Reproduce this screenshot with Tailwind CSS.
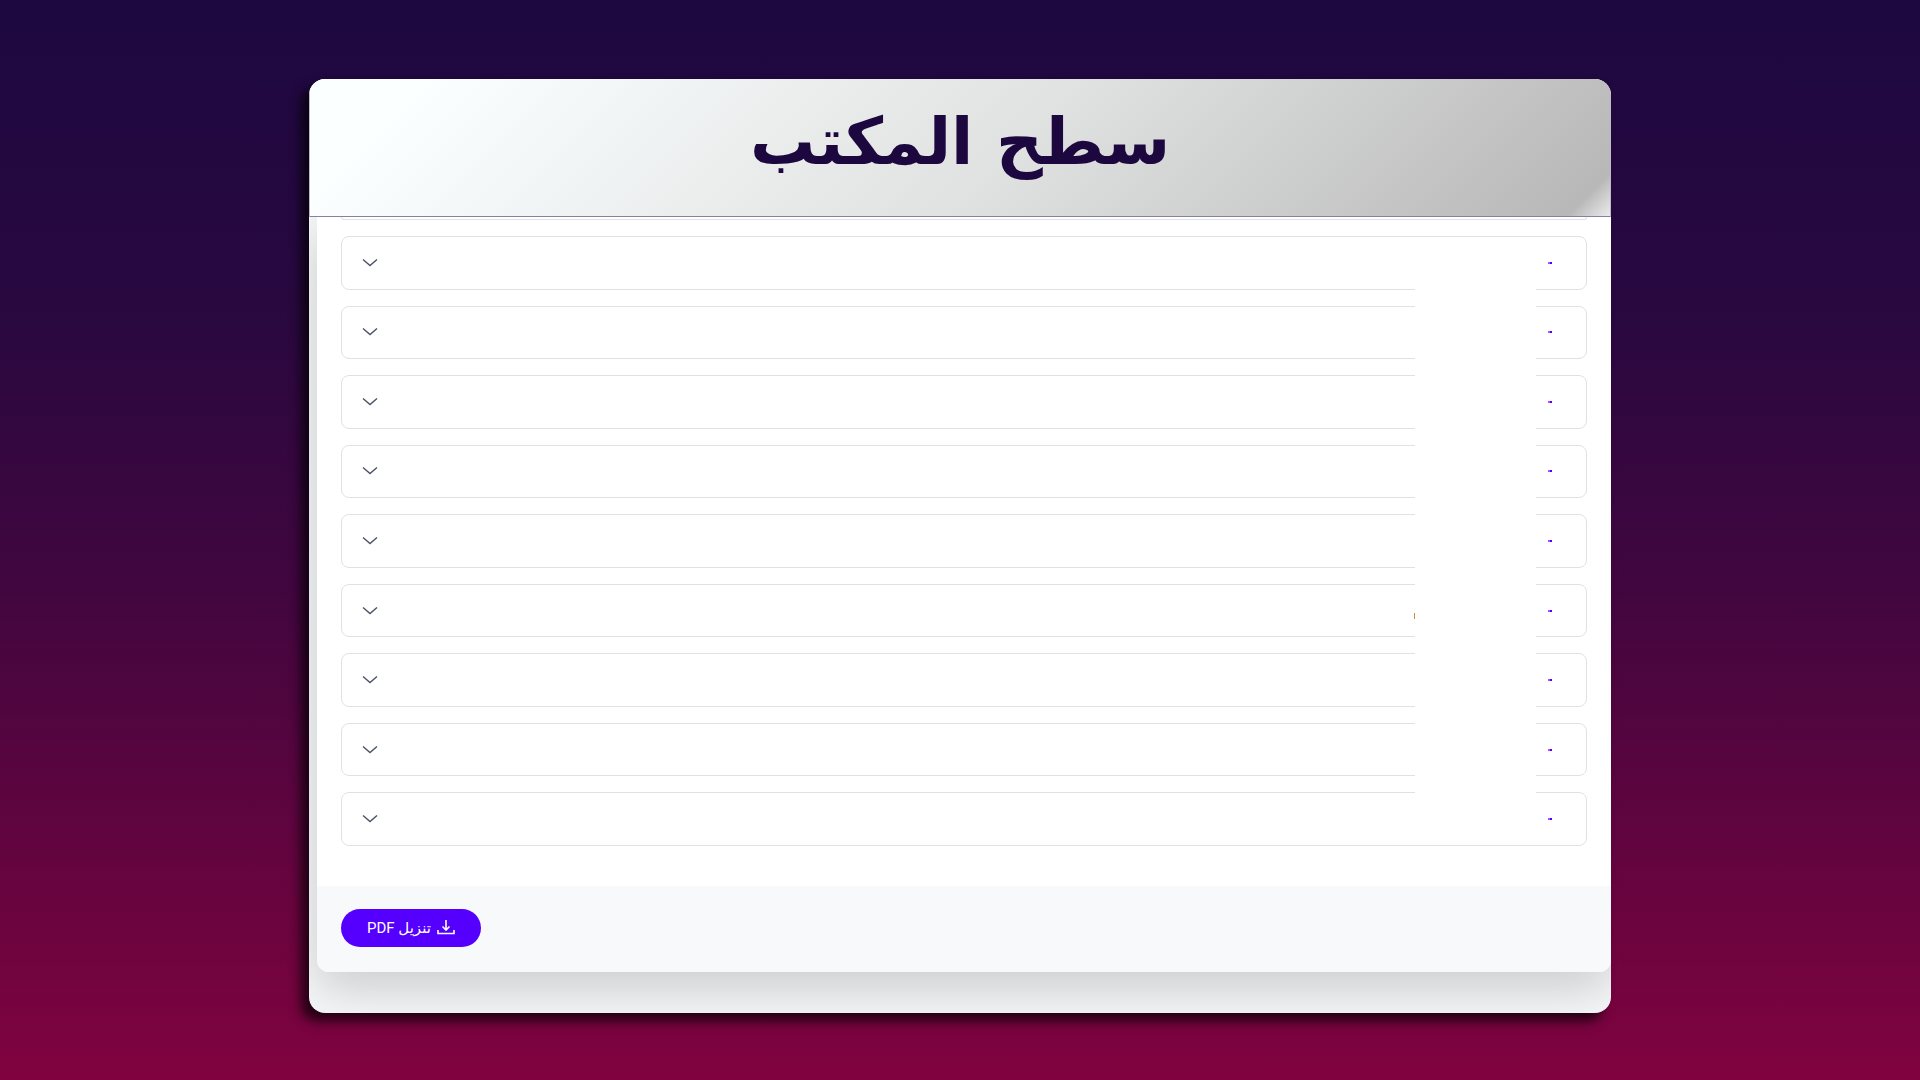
<!DOCTYPE html>
<html lang="ar" dir="rtl">
<head>
    <meta charset="UTF-8">
    <meta name="viewport" content="width=device-width, initial-scale=1.0">
    <title>سطح المكتب</title>
    <script src="https://cdn.jsdelivr.net/npm/@tailwindcss/browser@4"></script>
</head>
<body class="min-h-screen bg-[linear-gradient(180deg,#1d0840_0%,#2a0840_30%,#42063f_55%,#80033f_100%)] font-['DejaVu_Sans',sans-serif]">
    <main class="mx-auto w-[68%] max-w-[1302px] pt-[79px] pb-16">
        <div class="overflow-hidden rounded-2xl bg-[#f5f6f8] shadow-[-8px_8px_12px_rgba(0,0,0,0.7)]">
            <header class="relative z-10 flex h-[138px] items-center justify-center border-x border-b border-x-[#bdb9c6] border-b-[#8a7fa3] bg-[linear-gradient(135deg,#fbffff_8%,#e0e2e1_54%,#b8b8b8_97%,#ebebeb_100%)] pb-3">
                <h1 class="text-[65px] leading-none font-bold text-[#1c083e]">سطح المكتب</h1>
            </header>

            <div class="pb-[41px] pl-2">
                <section class="rounded-b-xl bg-white shadow-[0_16px_48px_rgba(0,0,0,0.175)]">
                    <div class="px-6 pb-10">
                        <!-- bottom edge of the item scrolled under the header -->
                        <div class="h-[3px] rounded-b-lg border-x border-b border-[#dee2e6]"></div>

                        <div class="relative mt-4">
                            <ul id="items" class="grid h-[610px] auto-rows-fr gap-4"></ul>
                            <div class="absolute top-2 right-[51px] bottom-2 w-[121px] bg-white"></div>
                        </div>
                    </div>

                    <footer class="flex justify-end rounded-b-xl bg-[#f8f9fb] px-6 pt-[23px] pb-[25px]">
                        <button class="flex h-[38px] items-center gap-[6px] rounded-full bg-[#5500ff] px-[26px] font-['Roboto','DejaVu_Sans',sans-serif] text-[15px] text-white">
                            <svg class="h-[18px] w-[18px]" viewBox="0 0 18 18" fill="none" stroke="currentColor" stroke-width="1.6">
                                <path d="M9 1v9.500M5.5 7.500 9 11 12.500 7.500M1 11v3.500h16V11" />
                            </svg>
                            <span>تنزيل PDF</span>
                        </button>
                    </footer>
                </section>
            </div>
        </div>
    </main>

    <template id="itemTemplate">
        <li class="flex">
            <button class="relative flex w-full items-center justify-between rounded-lg border border-[#dee2e6] bg-white pr-[34px] pl-5" aria-expanded="false">
                <span class="flex h-[2px] w-1">
                    <span class="w-1/2 bg-[#5500ff]"></span>
                    <span class="w-1/2 bg-[#b04dff]"></span>
                </span>
                <svg class="h-2 w-4" viewBox="0 0 16 8" fill="none" stroke="#4b5563" stroke-width="1.4">
                    <path d="M1 .5 8 6.500 15 .5" />
                </svg>
            </button>
        </li>
    </template>

    <script>
        const items = document.getElementById('items');
        const template = document.getElementById('itemTemplate');
        for (let i = 0; i < 9; i++) {
            const item = template.content.cloneNode(true);
            if (i === 5) {
                const mark = document.createElement('span');
                mark.className = 'absolute top-[28px] right-[171px] h-[6px] w-px bg-[#d08a30]';
                item.querySelector('button').append(mark);
            }
            items.append(item);
        }
    </script>
</body>
</html>
